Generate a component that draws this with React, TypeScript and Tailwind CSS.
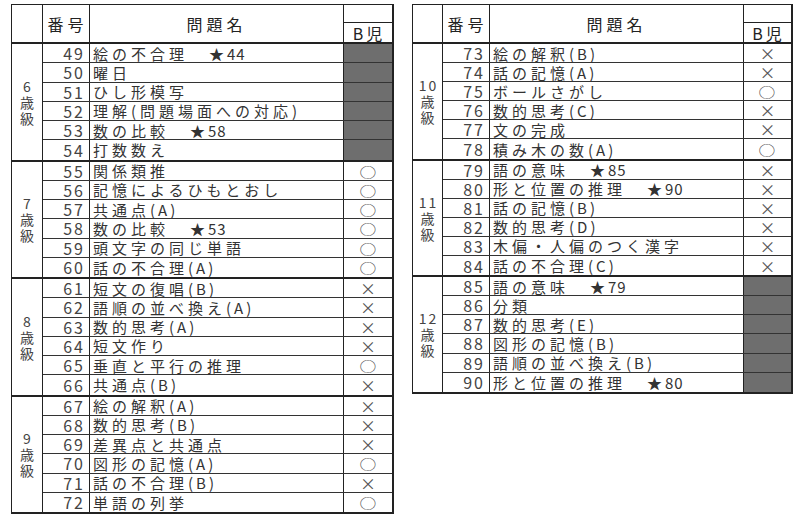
import React from "react";

type Row = { n: number; t: string; m: "o" | "x" | "f" };
type Group = { age: string; rows: Row[] };

const left: Group[] = [
  {
    age: "6",
    rows: [
      { n: 49, t: "絵の不合理　★44", m: "f" },
      { n: 50, t: "曜日", m: "f" },
      { n: 51, t: "ひし形模写", m: "f" },
      { n: 52, t: "理解(問題場面への対応)", m: "f" },
      { n: 53, t: "数の比較　★58", m: "f" },
      { n: 54, t: "打数数え", m: "f" },
    ],
  },
  {
    age: "7",
    rows: [
      { n: 55, t: "関係類推", m: "o" },
      { n: 56, t: "記憶によるひもとおし", m: "o" },
      { n: 57, t: "共通点(A)", m: "o" },
      { n: 58, t: "数の比較　★53", m: "o" },
      { n: 59, t: "頭文字の同じ単語", m: "o" },
      { n: 60, t: "話の不合理(A)", m: "o" },
    ],
  },
  {
    age: "8",
    rows: [
      { n: 61, t: "短文の復唱(B)", m: "x" },
      { n: 62, t: "語順の並べ換え(A)", m: "x" },
      { n: 63, t: "数的思考(A)", m: "x" },
      { n: 64, t: "短文作り", m: "x" },
      { n: 65, t: "垂直と平行の推理", m: "o" },
      { n: 66, t: "共通点(B)", m: "x" },
    ],
  },
  {
    age: "9",
    rows: [
      { n: 67, t: "絵の解釈(A)", m: "x" },
      { n: 68, t: "数的思考(B)", m: "x" },
      { n: 69, t: "差異点と共通点", m: "x" },
      { n: 70, t: "図形の記憶(A)", m: "o" },
      { n: 71, t: "話の不合理(B)", m: "x" },
      { n: 72, t: "単語の列挙", m: "o" },
    ],
  },
];

const right: Group[] = [
  {
    age: "10",
    rows: [
      { n: 73, t: "絵の解釈(B)", m: "x" },
      { n: 74, t: "話の記憶(A)", m: "x" },
      { n: 75, t: "ボールさがし", m: "o" },
      { n: 76, t: "数的思考(C)", m: "x" },
      { n: 77, t: "文の完成", m: "x" },
      { n: 78, t: "積み木の数(A)", m: "o" },
    ],
  },
  {
    age: "11",
    rows: [
      { n: 79, t: "語の意味　★85", m: "x" },
      { n: 80, t: "形と位置の推理　★90", m: "x" },
      { n: 81, t: "話の記憶(B)", m: "x" },
      { n: 82, t: "数的思考(D)", m: "x" },
      { n: 83, t: "木偏・人偏のつく漢字", m: "x" },
      { n: 84, t: "話の不合理(C)", m: "x" },
    ],
  },
  {
    age: "12",
    rows: [
      { n: 85, t: "語の意味　★79", m: "f" },
      { n: 86, t: "分類", m: "f" },
      { n: 87, t: "数的思考(E)", m: "f" },
      { n: 88, t: "図形の記憶(B)", m: "f" },
      { n: 89, t: "語順の並べ換え(B)", m: "f" },
      { n: 90, t: "形と位置の推理　★80", m: "f" },
    ],
  },
];

function Name({ t }: { t: string }) {
  const si = t.indexOf("★");
  const main = si >= 0 ? t.slice(0, si) : t;
  const star = si >= 0 ? t.slice(si) : "";
  const m = main.match(/^(.*)\((.)\)$/);
  return (
    <>
      {m ? (
        <>
          <span>{m[1]}</span>
          <span className="tracking-[3px]">(</span>
          <span className="tracking-[3px]">{m[2]}</span>
          <span className="tracking-[0px]">)</span>
        </>
      ) : (
        <span>{main}</span>
      )}
      {star && (
        <span className="tracking-[1px] ml-[2px]">
          <span className="mr-[2px]">★</span>
          {star.slice(1)}
        </span>
      )}
    </>
  );
}

function Table({ groups, ageW, rowH }: { groups: Group[]; ageW: string; rowH: string }) {
  return (
    <div className="border-t border-l border-[#222] border-r-2 border-b-2 bg-white">
      <div className="flex h-[39px] border-b-2 border-[#222]">
        <div className={`${ageW} shrink-0 border-r border-[#222]`} />
        <div className="w-[47px] shrink-0 border-r border-[#222] flex items-center justify-center text-[16px] tracking-[4px] pl-[3px]">
          番号
        </div>
        <div className="w-[254px] shrink-0 border-r border-[#222] flex items-center justify-center text-[16px] tracking-[4px]">
          問題名
        </div>
        <div className="flex-1 flex flex-col">
          <div className="h-[18px] border-b border-[#222]" />
          <div className="flex-1 flex items-end justify-center text-[16px] leading-[18px] tracking-[3px] pl-[2px]">
            B児
          </div>
        </div>
      </div>
      {groups.map((g, gi) => (
        <div
          key={g.age}
          className={`flex ${gi < groups.length - 1 ? "border-b-2 border-[#222]" : ""}`}
        >
          <div
            className={`${ageW} shrink-0 border-r border-[#222] flex flex-col items-center justify-center text-[14px] leading-[16px] text-[#444]`}
          >
            <span className="tracking-[2px] pl-[2px]">{g.age}</span>
            <span>歳</span>
            <span>級</span>
          </div>
          <div className="flex-1 flex flex-col">
            {g.rows.map((r, ri) => (
              <div
                key={r.n}
                className={`flex ${rowH} ${ri < g.rows.length - 1 ? "border-b border-[#333]" : ""}`}
              >
                <div className="w-[47px] shrink-0 border-r border-[#222] flex items-center justify-end pr-[4px] text-[16px] tracking-[2px] text-[#444]">
                  {r.n}
                </div>
                <div className="w-[254px] shrink-0 border-r border-[#222] flex items-center pl-[3px] text-[15px] tracking-[4px] whitespace-nowrap overflow-hidden text-[#333]">
                  <Name t={r.t} />
                </div>
                <div
                  className={`flex-1 flex items-center justify-center text-[#555] ${r.m === "f" ? "bg-[#6e6e6e]" : ""}`}
                >
                  {r.m === "o" ? (
                    <span className="inline-block text-[16px] scale-x-[1.05] scale-y-[0.8]">○</span>
                  ) : r.m === "x" ? (
                    <span className="inline-block text-[16px]">×</span>
                  ) : null}
                </div>
              </div>
            ))}
          </div>
        </div>
      ))}
    </div>
  );
}

export default function App() {
  return (
    <div
      className="w-[799px] h-[520px] bg-white text-[#222] flex items-start gap-[18px] pt-[4px] pl-[11px]"
      style={{ fontFamily: '"Noto Sans CJK JP", "Noto Sans", sans-serif' }}
    >
      <div className="w-[383px] leading-none">
        <Table groups={left} ageW="w-[31px]" rowH="h-[19.25px]" />
      </div>
      <div className="w-[381px] leading-none">
        <Table groups={right} ageW="w-[30px]" rowH="h-[19.1px]" />
      </div>
    </div>
  );
}
